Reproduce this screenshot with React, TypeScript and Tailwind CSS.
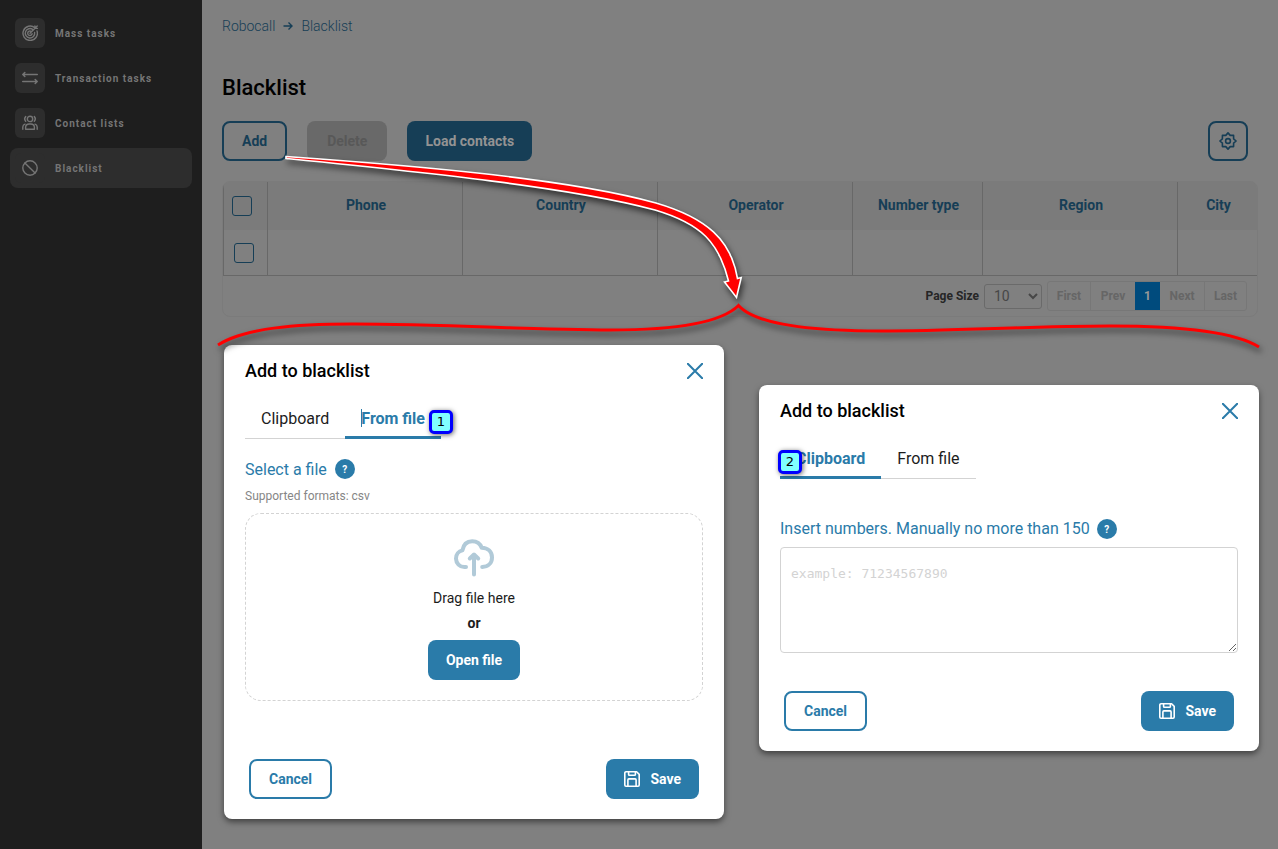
import { useState } from 'react';
import type { ReactNode } from 'react';

type TabId = 'clipboard' | 'file';

interface Column {
  title: string;
  width: string;
}

const columns: Column[] = [
  { title: 'Phone', width: 'w-[195px]' },
  { title: 'Country', width: 'w-[195px]' },
  { title: 'Operator', width: 'w-[195px]' },
  { title: 'Number type', width: 'w-[130px]' },
  { title: 'Region', width: 'w-[195px]' },
  { title: 'City', width: '' },
];

const iconProps = {
  viewBox: '0 0 16 16',
  fill: 'none',
  stroke: 'currentColor',
  strokeLinecap: 'round',
  strokeLinejoin: 'round',
} as const;

const TargetIcon = () => (
  <svg {...iconProps} className="w-4 h-4" strokeWidth={1.4}>
    <path d="M12.9 2.8A7.2 7.2 0 1 0 15 5.9" />
    <path d="M10.9 4.6A4.7 4.7 0 1 0 12.6 7.4" />
    <path d="M9.1 6.4A2.2 2.2 0 1 0 10.1 8.6" />
    <path d="M8 8.3 15.2 1.1M12.9 3.4V1M12.9 3.4h2.5" />
  </svg>
);

const ArrowsIcon = () => (
  <svg {...iconProps} className="w-4 h-4" strokeWidth={1.5}>
    <path d="M15.3 4.5H1M2.8 2.500 .8 4.5l2 2M.7 11.5H15M13.200 9.500l2 2-2 2" />
  </svg>
);

const UsersIcon = () => (
  <svg {...iconProps} className="w-4 h-4" strokeWidth={1.4}>
    <circle cx="8" cy="3.9" r="2.7" />
    <path d="M3.7 1.5a3.6 3.6 0 0 0 0 4.800M12.300 1.5a3.6 3.6 0 0 1 0 4.800" />
    <path d="M3.6 14.3v-1.8A3.6 3.6 0 0 1 7.2 9h1.6a3.6 3.6 0 0 1 3.6 3.5v1.8z" />
    <path d="M3 9.1A3.3 3.3 0 0 0 .8 12v2.3M13 9.1a3.3 3.3 0 0 1 2.2 2.9v2.3" />
  </svg>
);

const BanIcon = () => (
  <svg {...iconProps} className="w-4 h-4" strokeWidth={1.4}>
    <circle cx="8" cy="8" r="7.2" />
    <path d="m2.900 2.900 10.200 10.200" />
  </svg>
);

const SaveIcon = () => (
  <svg {...iconProps} className="w-4 h-4" strokeWidth={1.6}>
    <path d="M2 .8h10.6l2.6 2.6V14a1.2 1.2 0 0 1-1.2 1.2H2A1.2 1.2 0 0 1 .8 14V2A1.2 1.2 0 0 1 2 .8z" />
    <path d="M4.6 1v2.4a.9.9 0 0 0 .9.9h5a.9.9 0 0 0 .9-.9V1M3.9 15V8.9a1 1 0 0 1 1-1h6.2a1 1 0 0 1 1 1V15" />
  </svg>
);

const GearIcon = () => (
  <svg
    viewBox="0 0 18 18"
    className="w-[18px] h-[18px]"
    fill="none"
    stroke="currentColor"
    strokeWidth={1.6}
    strokeLinejoin="round"
  >
    <path d="M9 .9 11.200 3.400h3.400v3.400L17.1 9l-2.500 2.200v3.400h-3.400L9 17.1l-2.200-2.500H3.400v-3.400L.9 9l2.500-2.200V3.400h3.400z" />
    <circle cx="9" cy="9" r="2.4" />
  </svg>
);

const CloudIcon = () => (
  <svg
    viewBox="0 0 40 40"
    className="w-10 h-10 text-[#b1cad8]"
    fill="none"
    stroke="currentColor"
    strokeWidth={4}
    strokeLinecap="round"
    strokeLinejoin="round"
  >
    <path d="M12 29H10.5A8.4 8.4 0 0 1 2 20.5c0-4 2.6-7.2 6.4-8.1C9.4 6.5 13 3.200 18.2 3.200c4.600 0 8 2.400 9.500 6.500C34 9.900 38 13.600 38 19.400c0 5.500-3.800 9.400-9.800 9.600" />
    <path d="M20 36.500V18M15.800 20.500 20 16.500l4.200 4" />
  </svg>
);

const menu = [
  { label: 'Mass tasks', icon: <TargetIcon /> },
  { label: 'Transaction tasks', icon: <ArrowsIcon /> },
  { label: 'Contact lists', icon: <UsersIcon /> },
  { label: 'Blacklist', icon: <BanIcon />, active: true },
];

function Sidebar() {
  return (
    <aside className="w-[202px] shrink-0 bg-[#1e1e1e] px-2.5 pt-[13px]">
      <nav className="flex flex-col gap-[5px]">
        {menu.map(item => (
          <a
            key={item.label}
            href="#"
            className={`h-10 px-[5px] flex items-center gap-2.5 rounded-lg text-[#757575] ${item.active ? 'bg-[#2d2d2d]' : ''}`}
          >
            <span className="w-[30px] h-[30px] flex items-center justify-center rounded-md bg-[#2d2d2d]">
              {item.icon}
            </span>
            <span className="text-[10px] font-bold tracking-widest">{item.label}</span>
          </a>
        ))}
      </nav>
    </aside>
  );
}

function Checkbox({ label }: { label: string }) {
  return (
    <input
      type="checkbox"
      aria-label={label}
      className="block w-5 h-5 appearance-none border border-[#163e56] rounded-[3px] checked:bg-[#163e56]"
    />
  );
}

function BlacklistTable() {
  return (
    <div className="mt-5 border border-[#7b7b7b] rounded-lg overflow-hidden">
      <table className="w-full table-fixed border-separate border-spacing-0 text-sm">
        <thead>
          <tr className="h-12 bg-[#7b7b7b] text-[#163e56]">
            <th className="w-[45px] border-x border-[#686868] pl-2">
              <Checkbox label="Select all" />
            </th>
            {columns.map(col => (
              <th
                key={col.title}
                className={`${col.width} border-r border-[#686868] last:border-r-0 pl-0.5 pb-0.5 font-bold`}
              >
                {col.title}
              </th>
            ))}
          </tr>
        </thead>
        <tbody>
          <tr className="h-[46px]">
            <td className="border-x border-b border-[#686868] pl-2.5">
              <Checkbox label="Select row" />
            </td>
            {columns.map(col => (
              <td key={col.title} className="border-r border-b border-[#686868] last:border-r-0" />
            ))}
          </tr>
        </tbody>
      </table>

      <div className="flex items-center justify-end h-10 pr-2.5 text-xs">
        <label htmlFor="page-size" className="font-bold text-[#262626]">
          Page Size
        </label>
        <select
          id="page-size"
          className="ml-[5px] w-[58px] h-[25px] pl-[5px] border border-[#6a6a6a] rounded-[3px] bg-[#808080] text-sm text-[#474747]"
        >
          <option>10</option>
          <option>25</option>
          <option>50</option>
        </select>
        <div className="ml-[5px] flex h-[30px] border border-[#777] rounded-[3px] font-bold text-[#666]">
          <button className="w-[43px] border-r border-[#777]">First</button>
          <button className="w-[44px]">Prev</button>
          <button className="w-[25px] bg-[#004b7d] font-bold text-[#999]">1</button>
          <button className="w-[45px] border-r border-[#777]">Next</button>
          <button className="w-[41px]">Last</button>
        </div>
      </div>
    </div>
  );
}

function Marker({ value, className }: { value: number; className: string }) {
  return (
    <span
      className={`absolute w-6 h-6 flex items-center justify-center border-[3px] border-[#0000fe] rounded-[5px] bg-[#80ffff] font-['DejaVu_Sans'] text-[13px] font-normal text-black shadow-[1px_1px_5px_rgba(0,0,0,0.6)] ${className}`}
    >
      {value}
    </span>
  );
}

interface DialogProps {
  id: string;
  initialTab: TabId;
  className?: string;
  marker: ReactNode;
}

function AddDialog({ id, initialTab, className = '', marker }: DialogProps) {
  const [tab, setTab] = useState<TabId>(initialTab);

  const tabClass = (name: TabId) =>
    `h-10 px-4 ${tab === name ? 'border-b-[3px] border-[#2a7ba9] pt-0.5 font-bold text-[#2a7ba9]' : 'border-b border-[#d3d3d3]'}`;

  return (
    <section
      role="dialog"
      aria-labelledby={`${id}-title`}
      className={`w-[500px] rounded-lg bg-white px-[21px] pt-3.5 pb-5 text-[#1c1c1c] shadow-[0_3px_6px_rgba(0,0,0,0.5)] ${className}`}
    >
      <div className="flex items-center justify-between h-6">
        <h2 id={`${id}-title`} className="text-lg font-medium text-black">
          Add to blacklist
        </h2>
        <button aria-label="Close" className="text-[#2a7ba9]">
          <svg {...iconProps} className="w-4 h-4" strokeWidth={2}>
            <path d="m.8.8 14.400 14.400M15.200.8.8 15.200" />
          </svg>
        </button>
      </div>

      <div className="relative w-fit flex mt-4 text-base" role="tablist">
        <button role="tab" aria-selected={tab === 'clipboard'} className={tabClass('clipboard')} onClick={() => setTab('clipboard')}>
          Clipboard
        </button>
        <button role="tab" aria-selected={tab === 'file'} className={`relative ${tabClass('file')}`} onClick={() => setTab('file')}>
          {tab === 'file' && <span className="absolute left-4 top-2.5 w-px h-[18px] bg-[#2a7ba9]" />}
          From file
        </button>
        {marker}
      </div>

      {tab === 'file' ? (
        <>
          <div className="mt-5 h-5 flex items-center gap-2 text-[#2a7ba9]">
            <span className="pt-0.5">Select a file</span>
            <HelpButton />
          </div>
          <p className="mt-[9px] text-xs leading-4 text-[#868686]">Supported formats: csv</p>
          <div className="mt-[9px] pt-6 pb-5 flex flex-col items-center border border-dashed border-[#d3d3d3] rounded-2xl text-sm">
            <CloudIcon />
            <span className="mt-2.5">Drag file here</span>
            <span className="mt-[5px] font-bold">or</span>
            <button className="mt-[7px] h-10 px-[18px] rounded-lg bg-[#2a7ba9] font-bold text-white">Open file</button>
          </div>
        </>
      ) : (
        <>
          <div className="mt-10 h-5 flex items-center gap-[7px] text-[#2a7ba9]">
            <label htmlFor={`${id}-numbers`}>Insert numbers. Manually no more than 150</label>
            <HelpButton />
          </div>
          <textarea
            id={`${id}-numbers`}
            placeholder="example: 71234567890"
            className="block mt-2 w-full h-[106px] px-2.5 py-4 border border-[#d3d3d3] rounded font-['DejaVu_Sans_Mono',monospace] text-[13px] placeholder:text-[#d3d3d3]"
          />
        </>
      )}

      <div className={`flex justify-between px-1 text-sm font-bold ${tab === 'file' ? 'mt-[58px]' : 'mt-[38px]'}`}>
        <button className="h-10 px-[18px] border-2 border-[#2a7ba9] rounded-lg text-[#2a7ba9]">Cancel</button>
        <button className="h-10 px-[18px] flex items-center gap-2.5 rounded-lg bg-[#2a7ba9] text-white">
          <SaveIcon />
          Save
        </button>
      </div>
    </section>
  );
}

function HelpButton() {
  return (
    <button
      aria-label="Help"
      className="w-5 h-5 flex items-center justify-center rounded-full bg-[#2a7ba9] text-[10px] font-bold text-white"
    >
      ?
    </button>
  );
}

// Red arrow from the Add button and the brace over both dialogs
function Callout() {
  return (
    <svg
      width="1278"
      height="400"
      viewBox="0 0 1278 400"
      className="absolute top-0 left-0 pointer-events-none drop-shadow-[2px_4px_3px_rgba(0,0,0,0.6)]"
      fill="none"
    >
      <path
        d="M286 156.500C420 166 570 179 656 203 707 218 731 240 737.500 278.500L741.200 277.500 736.500 297.500 724.500 282 728.500 281C719 243 702 224 655 210 570 187 420 172 286 158.500z"
        fill="#f00"
        stroke="#fff"
        strokeWidth="1.600"
      />
      <path
        d="M218 345C245 328 295 324 353 324 440 324 540 330 610 330 680 330 722 322 738.500 305.500 755 324 805 331 880 331 950 331 1040 326 1110 326 1180 326 1235 332 1259 347"
        stroke="#f00"
        strokeWidth="3"
      />
    </svg>
  );
}

export default function App() {
  return (
    <div className="relative min-h-screen flex bg-[#808080] font-[Roboto,sans-serif]">
      <Sidebar />

      <main className="flex-1 min-w-0 pt-4 pb-7">
        <div className="px-5">
          <nav className="flex items-center gap-2 text-sm font-light text-[#163e56]">
            <a href="#">Robocall</a>
            <svg viewBox="0 0 10 10" className="w-2.5 h-2.5" fill="none" stroke="currentColor" strokeWidth={1.4}>
              <path d="M.5 5H9M5.500 1.500 9 5 5.500 8.500" />
            </svg>
            <a href="#">Blacklist</a>
          </nav>

          <h1 className="mt-9 text-[22px] leading-8 font-medium text-black">Blacklist</h1>

          <div className="mt-[17px] flex gap-5 text-sm font-bold">
            <button className="h-10 px-[18px] border-2 border-[#163e56] rounded-lg text-[#163e56]">Add</button>
            <button disabled className="h-10 px-5 rounded-lg bg-[#696969] text-[#585858]">
              Delete
            </button>
            <button className="h-10 px-[18px] rounded-lg bg-[#163e56] text-[#939393]">Load contacts</button>
            <button
              aria-label="Settings"
              className="ml-auto mr-2.5 w-10 h-10 flex items-center justify-center border-2 border-[#163e56] rounded-lg text-[#163e56]"
            >
              <GearIcon />
            </button>
          </div>

          <BlacklistTable />
        </div>

        <div className="mt-7 pl-[22px] pr-[19px] flex flex-wrap items-start justify-between gap-y-6">
          <AddDialog id="from-file" initialTab="file" marker={<Marker value={1} className="-right-3 top-[11px]" />} />
          <AddDialog
            id="clipboard"
            initialTab="clipboard"
            className="mt-10"
            marker={<Marker value={2} className="-left-0.5 top-[11px]" />}
          />
        </div>
      </main>

      <Callout />
    </div>
  );
}
